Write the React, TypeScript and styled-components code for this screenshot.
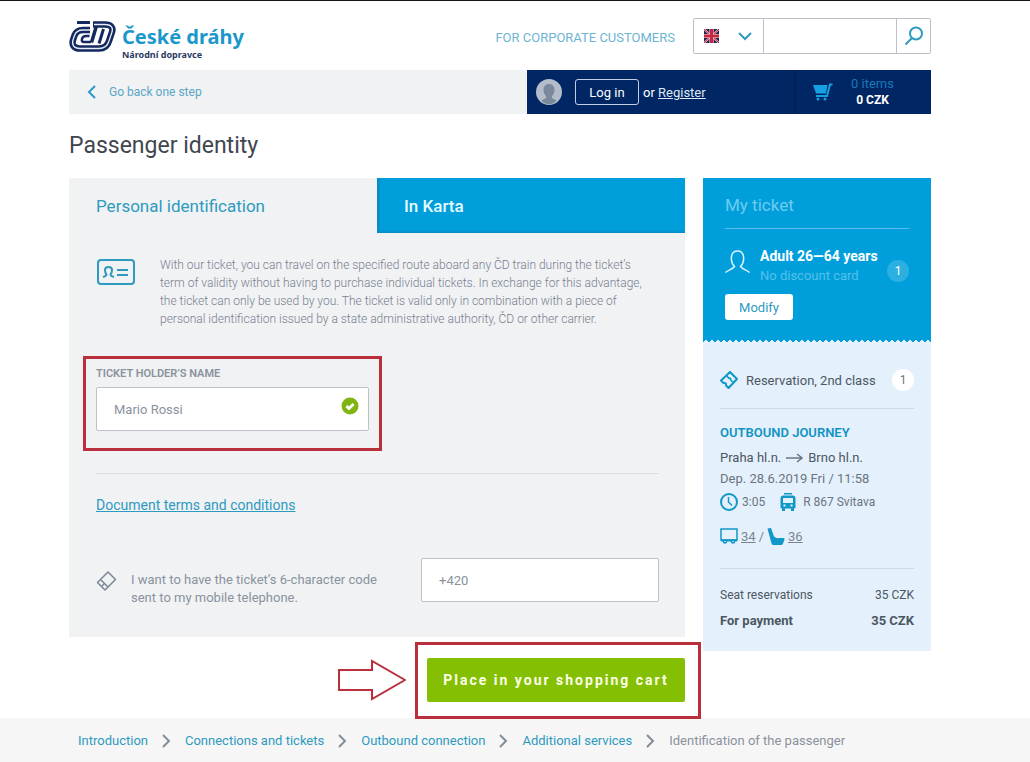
import React from "react";
import styled, { createGlobalStyle } from "styled-components";

const c = {
  blue: "#009fdc",
  link: "#2e9abf",
  icon: "#0f98c8",
  navy: "#002664",
  panel: "#f0f2f4",
  pale: "#e4f0fb",
  text: "#4c5763",
  muted: "#8a929e",
  border: "#bcc1ca",
  line: "#dcdfe3",
  red: "#b9303c",
  green: "#84bf04",
};

const GlobalStyle = createGlobalStyle`
  *, *::before, *::after { box-sizing: border-box; }
  body {
    margin: 0;
    background: #fff;
    color: ${c.text};
    font-family: Roboto, "Liberation Sans", sans-serif;
    font-size: 13px;
  }
  button, input, select { font: inherit; }
  svg { display: block; flex: none; }
`;

const Page = styled.div`
  border-top: 1px solid #17131a;
`;

const Container = styled.div`
  padding: 0 99px 0 69px;
`;

/* ---------- Header ---------- */

const Header = styled.header`
  display: flex;
  align-items: flex-start;
  justify-content: space-between;
  padding-top: 17px;
  min-height: 69px;
`;

const Brand = styled.a`
  display: flex;
  gap: 6px;
  padding-top: 2px;
  text-decoration: none;
`;

const BrandText = styled.span`
  display: flex;
  flex-direction: column;
  padding-top: 1px;
  font-family: "Noto Sans", sans-serif;
  font-weight: 700;
`;

const BrandName = styled.span`
  color: #1a97cb;
  font-size: 20px;
  line-height: 32px;
`;

const BrandSub = styled.span`
  color: #2b3a63;
  font-size: 9px;
  line-height: 8px;
  margin-top: -2px;
`;

const HeaderTools = styled.div`
  display: flex;
  gap: 18px;
`;

const CorporateLink = styled.a`
  color: #6db5d3;
  font-size: 13px;
  line-height: 40px;
  text-decoration: none;
`;

const SearchGroup = styled.form`
  display: flex;
  width: 238px;
  height: 36px;
  border: 1px solid ${c.border};
  border-radius: 2px;
`;

const Language = styled.label`
  position: relative;
  display: flex;
  align-items: center;
  justify-content: space-between;
  width: 70px;
  padding: 0 11px 0 10px;
  border-right: 1px solid ${c.border};
`;

const LanguageSelect = styled.select`
  position: absolute;
  inset: 0;
  width: 100%;
  appearance: none;
  border: 0;
  background: transparent;
`;

const SearchInput = styled.input`
  flex: 1;
  min-width: 0;
  border: 0;
  padding: 0 10px;
  background: transparent;
`;

const SearchButton = styled.button`
  display: grid;
  place-items: center;
  width: 34px;
  padding: 0;
  border: 0;
  border-left: 1px solid ${c.border};
  background: transparent;
`;

/* ---------- User bar ---------- */

const UserBar = styled.div`
  display: flex;
  height: 44px;
`;

const BackArea = styled.nav`
  flex: 1;
  display: flex;
  align-items: center;
  padding-left: 18px;
  background: ${c.panel};
`;

const BackLink = styled.a`
  display: flex;
  align-items: center;
  gap: 13px;
  color: #5ba6c4;
  font-size: 12px;
  text-decoration: none;
`;

const Account = styled.div`
  display: flex;
  align-items: center;
  width: 267px;
  padding-left: 9px;
  background: ${c.navy};
  color: #fff;
`;

const LoginButton = styled.button`
  width: 64px;
  height: 26px;
  margin: 0 4px 0 13px;
  padding: 0;
  border: 1px solid #c3cfe2;
  border-radius: 3px;
  background: transparent;
  color: #fff;
`;

const RegisterLink = styled.a`
  color: #dfe8f5;
`;

const Cart = styled.a`
  display: flex;
  align-items: center;
  gap: 18px;
  width: 137px;
  padding-left: 17px;
  border-left: 2px solid #001f52;
  background: ${c.navy};
  text-decoration: none;
`;

const CartText = styled.span`
  display: flex;
  flex-direction: column;
  align-items: center;
  color: #1879bb;
  font-size: 13px;
  line-height: 17px;

  strong {
    color: #fff;
    font-size: 12px;
  }
`;

/* ---------- Content ---------- */

const Title = styled.h1`
  margin: 0;
  color: #3f4650;
  font-size: 23px;
  font-weight: 400;
  line-height: 64px;
`;

const Columns = styled.div`
  display: grid;
  grid-template-columns: 1fr 228px;
  gap: 18px;
  align-items: start;
`;

const Panel = styled.section`
  background: ${c.panel};
`;

const Tabs = styled.div`
  display: grid;
  grid-template-columns: 1fr 1fr;
  height: 55px;
`;

const Tab = styled.button<{ $active?: boolean }>`
  padding: 0 27px;
  border: 0;
  background: ${(p) => (p.$active ? "transparent" : c.blue)};
  box-shadow: ${(p) => (p.$active ? "none" : "inset 3px -2px 3px -1px #0c86bd")};
  color: ${(p) => (p.$active ? c.link : "#e6fbff")};
  font-size: 17px;
  font-weight: ${(p) => (p.$active ? 400 : 500)};
  text-align: left;
`;

const PanelBody = styled.div`
  padding: 23px 26px 30px 27px;
`;

const Intro = styled.div`
  display: flex;
  align-items: flex-start;
  gap: 25px;

  svg {
    margin-top: 2px;
  }

  p {
    margin: 0;
    color: #78808f;
    font-size: 12px;
    font-weight: 300;
    line-height: 18px;
  }
`;

const Field = styled.div`
  position: relative;
  width: 273px;
  margin-top: 38px;
`;

const FieldLabel = styled.label`
  display: block;
  margin-bottom: 5px;
  color: ${c.muted};
  font-size: 11px;
  font-weight: 600;
  line-height: 16px;
`;

const TextInput = styled.input`
  display: block;
  width: 100%;
  height: 44px;
  padding: 0 17px;
  border: 1px solid ${c.border};
  border-radius: 2px;
  background: #fff;
  color: ${c.muted};
  font-size: 13px;
`;

const ValidMark = styled.span`
  position: absolute;
  right: 10px;
  bottom: 16px;
`;

const FieldHighlight = styled.span`
  position: absolute;
  inset: -10px -13px -20px;
  border: 3px solid ${c.red};
  pointer-events: none;
`;

const Divider = styled.hr<{ $space: string; $color?: string }>`
  height: 1px;
  margin: ${(p) => p.$space};
  border: 0;
  background: ${(p) => p.$color || c.line};
`;

const TermsLink = styled.a`
  display: inline-block;
  color: ${c.link};
  font-size: 14px;
  line-height: 20px;
`;

const SmsRow = styled.div`
  display: flex;
  align-items: flex-start;
  justify-content: space-between;
  margin-top: 43px;
`;

const SmsLabel = styled.label`
  display: flex;
  gap: 14px;
  width: 300px;
  padding-top: 13px;
  color: ${c.muted};
  line-height: 18px;
`;

const PhoneBox = styled.div`
  width: 238px;
`;

const Actions = styled.div`
  display: flex;
  align-items: center;
  justify-content: flex-end;
  gap: 21px;
  padding: 21px 0 16px;
`;

const SubmitWrap = styled.div`
  position: relative;
`;

const SubmitHighlight = styled.span`
  position: absolute;
  inset: -16px -16px -17px -12px;
  border: 3px solid ${c.red};
  pointer-events: none;
`;

const SubmitButton = styled.button`
  display: block;
  width: 258px;
  height: 44px;
  padding: 0;
  border: 0;
  border-radius: 2px;
  background: ${c.green};
  color: #fbffe6;
  font-size: 14px;
  font-weight: 700;
  letter-spacing: 2px;
`;

/* ---------- Ticket ---------- */

const Ticket = styled.aside`
  background: ${c.pale};
`;

const TicketTop = styled.div`
  height: 161px;
  padding: 13px 22px 0;
  background: ${c.blue};
`;

const TicketEdge = styled.div`
  height: 3px;
  background-image:
    linear-gradient(45deg, transparent 75%, ${c.blue} 75%),
    linear-gradient(-45deg, transparent 75%, ${c.blue} 75%);
  background-size: 6px 6px;
`;

const TicketTitle = styled.h2`
  margin: 0;
  color: #6fcbef;
  font-size: 17px;
  font-weight: 400;
  line-height: 28px;
`;

const Passenger = styled.div`
  display: flex;
  align-items: flex-start;
  gap: 10px;

  svg {
    margin-top: 4px;
  }
`;

const PassengerText = styled.div`
  flex: 1;
  color: #55c0ea;
  font-size: 13px;
  line-height: 20px;
  white-space: nowrap;

  strong {
    display: block;
    color: #fff;
    font-size: 14px;
  }
`;

const Badge = styled.span<{ $pale?: boolean }>`
  width: 22px;
  height: 22px;
  border-radius: 50%;
  background: ${(p) => (p.$pale ? "#fff" : "#2cb0e2")};
  color: ${(p) => (p.$pale ? "#6c7480" : "#fff")};
  font-size: 12px;
  line-height: 22px;
  text-align: center;
`;

const PassengerBadge = styled(Badge)`
  align-self: flex-end;
  margin: 0 0 4px -10px;
`;

const ModifyButton = styled.button`
  width: 68px;
  height: 26px;
  margin-top: 8px;
  padding: 0;
  border: 0;
  border-radius: 3px;
  background: #fff;
  color: ${c.link};
`;

const TicketBody = styled.div`
  padding: 25px 17px 18px;
`;

const Line = styled.div<{ $size?: number; $color?: string; $height: number; $gap?: number }>`
  display: flex;
  align-items: center;
  gap: ${(p) => p.$gap || 0}px;
  height: ${(p) => p.$height}px;
  color: ${(p) => p.$color || c.text};
  font-size: ${(p) => p.$size || 13}px;
  white-space: nowrap;
`;

const LineEnd = styled.span`
  margin-left: auto;
`;

const JourneyTitle = styled.h3`
  margin: 0;
  color: #1393c4;
  font-size: 13px;
  font-weight: 600;
  line-height: 24px;
`;

const TrainGroup = styled.span`
  display: flex;
  align-items: center;
  gap: 7px;
  margin-left: 11px;
`;

const PlaceLink = styled.a`
  color: #7b8592;
`;

const Total = styled(Line)`
  font-weight: 700;
`;

/* ---------- Breadcrumb ---------- */

const Breadcrumb = styled.nav`
  display: flex;
  align-items: center;
  gap: 14px;
  min-height: 44px;
  padding: 1px 78px 0;
  background: #f6f6f6;
  color: ${c.muted};
  white-space: nowrap;

  a {
    color: ${c.link};
    text-decoration: none;
  }
`;

/* ---------- Drawings ---------- */

const Logo = () => (
  <svg width="47" height="33" viewBox="0 0 47 33" fill="none" strokeLinejoin="round">
    <g stroke="#14295f">
      <path
        d="M24 4.500H36C42 4.500 44.500 7.500 43 12L40 21C38.500 26 35 28.500 30 28.500H11C5 28.500 2.500 25 4 20L5.500 15.500C7 11.500 9.500 10 14 10H21"
        strokeWidth="6.500"
      />
      <path d="M20.500 16H17C14.500 16 13.500 17 13 19C12.500 21 13 22 15 22H22" strokeWidth="2.500" />
      <path d="M28 4L22.500 22.500" strokeWidth="3.500" />
      <path d="M34.500 9L30 23.500" strokeWidth="3" />
      <path d="M8 2.500H21" strokeWidth="3" />
    </g>
    <path
      d="M25 4.500H36C42 4.500 44.500 7.500 43 12L40 21C38.500 26 35 28.500 30 28.500H11C5 28.500 2.500 25 4 20L5.500 15.500C7 11.500 9.500 10 14 10H21"
      stroke="#e6edf6"
      strokeWidth="1.300"
    />
  </svg>
);

const Flag = () => (
  <svg width="15" height="14" viewBox="0 0 15 14">
    <rect width="15" height="14" fill="#2a2148" />
    <path d="M0 0L15 14M15 0L0 14" stroke="#e3c9d2" strokeWidth="2" />
    <path d="M0 0L15 14M15 0L0 14" stroke="#c8283f" strokeWidth="1" />
    <path d="M7.500 0V14M0 7H15" stroke="#f3e0e6" strokeWidth="4" />
    <path d="M7.500 0V14M0 7H15" stroke="#c8283f" strokeWidth="3" />
  </svg>
);

const Chevron = ({ d, w, h, color }: { d: string; w: number; h: number; color: string }) => (
  <svg width={w} height={h} viewBox={`0 0 ${w} ${h}`} fill="none" stroke={color} strokeWidth="2">
    <path d={d} />
  </svg>
);

const SearchIcon = () => (
  <svg width="20" height="20" viewBox="0 0 20 20" fill="none" stroke={c.link} strokeWidth="2">
    <circle cx="12" cy="7.500" r="6" />
    <path d="M8 12L1.500 18.500" />
  </svg>
);

const Avatar = () => (
  <svg width="26" height="26" viewBox="0 0 26 26">
    <circle cx="13" cy="13" r="13" fill="#b3bcc8" />
    <path
      d="M13 5C9.500 5 7.500 7.500 7.500 11C7.500 14 9 16 10 17V19L5.500 21.500C9 26.500 17 26.500 20.500 21.500L16 19V17C17 16 18.500 14 18.500 11C18.500 7.500 16.500 5 13 5Z"
      fill="#7a899b"
    />
  </svg>
);

const CartIcon = () => (
  <svg width="20" height="18" viewBox="0 0 20 18" fill="#14a0e2">
    <path d="M0 2H14.500L13 10.500H3Z" />
    <path d="M19.500 1.500H17L14 13H3" fill="none" stroke="#14a0e2" strokeWidth="2" />
    <circle cx="5" cy="16" r="1.500" />
    <circle cx="12" cy="16" r="1.500" />
  </svg>
);

const IdCardIcon = () => (
  <svg width="39" height="28" viewBox="0 0 39 28" fill="none" stroke={c.link} strokeWidth="2">
    <rect x="2" y="2" width="36" height="24" rx="3" />
    <path d="M7 19C9 18.500 10.500 18 10.500 16.500C9 15 9 13 9 12C9 10 10.500 9 12.500 9C14.500 9 16 10 16 12C16 13 16 15 14.500 16.500C14.500 18 16 18.500 18 19" />
    <path d="M21 12H32M21 17H32" />
  </svg>
);

const CheckIcon = () => (
  <svg width="18" height="18" viewBox="0 0 18 18">
    <circle cx="9" cy="9" r="8.500" fill="#7fb413" />
    <path d="M5.500 9L8 11.500L12.500 7" fill="none" stroke="#fff" strokeWidth="3" />
  </svg>
);

const CodeIcon = () => (
  <svg width="21" height="20" viewBox="0 0 21 20" fill="none" stroke="#7d8794" strokeWidth="1.500" strokeLinejoin="round">
    <path d="M12 1L19.500 8.500L9 19L1.500 11.500ZM4.500 8.500L12 16" />
    <path d="M5.500 15.500L8.500 12.500" />
  </svg>
);

const PersonIcon = () => (
  <svg width="25" height="24" viewBox="0 0 25 24" fill="none" stroke="#d8f4ff" strokeWidth="1.500">
    <path d="M0.500 22.500C2 20.500 7 20 9.500 16.500C6.500 13.500 6 10 6.500 6.500C7 3 9 1 12.500 1C16 1 18 3 18.500 6.500C19 10 18.500 13.500 15.500 16.500C18 20 23 20.500 24.500 22.500" />
  </svg>
);

const TicketIcon = () => (
  <svg width="18" height="18" viewBox="0 0 18 18" fill="none" stroke={c.icon} strokeWidth="2" strokeLinejoin="round">
    <path d="M10 1L17 8L8.500 17L6 14.500C6.500 13 5.500 11.500 3.500 12L1 9.500Z" />
    <path d="M6.500 4.500L9 7.500C10 6.500 11.500 8 10.500 9L13.500 11.500" strokeWidth="1.500" />
  </svg>
);

const ArrowIcon = () => (
  <svg width="17" height="10" viewBox="0 0 17 10" fill="none" stroke="#6d7783" strokeWidth="1.500">
    <path d="M0 5H16M11 1L16 5L11 9" />
  </svg>
);

const ClockIcon = () => (
  <svg width="18" height="18" viewBox="0 0 18 18" fill="none" stroke={c.icon} strokeWidth="2">
    <circle cx="9" cy="9" r="8" />
    <path d="M8.500 4V9L12 12.500" strokeWidth="1.500" />
  </svg>
);

const TrainIcon = () => (
  <svg width="16" height="18" viewBox="0 0 16 18" fill={c.icon}>
    <path d="M4 0H12V1.500H4Z" />
    <path
      fillRule="evenodd"
      d="M3.500 2.500H12.500Q15.500 2.500 15.500 5.500V14Q15.500 15.500 14 15.500H2Q0.500 15.500 0.500 14V5.500Q0.500 2.500 3.500 2.500ZM3 5V10H13V5ZM3.500 11.500V13.500H5.500V11.500ZM10.500 11.500V13.500H12.500V11.500Z"
    />
    <path d="M2 15H5V18H2ZM11 15H14V18H11Z" />
  </svg>
);

const CarriageIcon = () => (
  <svg width="18" height="16" viewBox="0 0 18 16" fill="none" stroke={c.icon}>
    <path d="M1 1H17V12H1Z" strokeWidth="1.500" />
    <path d="M1 12.500H17" strokeWidth="2" />
    <circle cx="5" cy="13.500" r="1.500" fill={c.pale} strokeWidth="1.500" />
    <circle cx="13" cy="13.500" r="1.500" fill={c.pale} strokeWidth="1.500" />
  </svg>
);

const SeatIcon = () => (
  <svg width="18" height="17" viewBox="0 0 18 17" fill={c.icon}>
    <path d="M0.500 0.500L4 0L7 8.500Q10 11 12 10H16.500Q18 10 17.500 11.500L16 15.500Q15.500 17 14 17H6.500Q5 17 4.500 15.500Z" />
  </svg>
);

const PointerArrow = () => (
  <svg width="68" height="42" viewBox="0 0 68 42" fill="none" stroke={c.red} strokeWidth="2">
    <path d="M1 11H34V2L67 21L34 40V31H1Z" />
  </svg>
);

const crumbs = ["Introduction", "Connections and tickets", "Outbound connection", "Additional services"];

export default function App() {
  return (
    <Page>
      <GlobalStyle />
      <Container>
        <Header>
          <Brand href="#">
            <Logo />
            <BrandText>
              <BrandName>České dráhy</BrandName>
              <BrandSub>Národní dopravce</BrandSub>
            </BrandText>
          </Brand>
          <HeaderTools>
            <CorporateLink href="#">FOR CORPORATE CUSTOMERS</CorporateLink>
            <SearchGroup role="search">
              <Language>
                <Flag />
                <Chevron d="M1 1L7 7L13 1" w={14} h={9} color={c.link} />
                <LanguageSelect aria-label="Language">
                  <option value="en" aria-label="English" />
                </LanguageSelect>
              </Language>
              <SearchInput type="search" aria-label="Search" />
              <SearchButton type="submit" aria-label="Search">
                <SearchIcon />
              </SearchButton>
            </SearchGroup>
          </HeaderTools>
        </Header>

        <UserBar>
          <BackArea>
            <BackLink href="#">
              <Chevron d="M8 1L2 7L8 13" w={9} h={14} color={c.link} />
              Go back one step
            </BackLink>
          </BackArea>
          <Account>
            <Avatar />
            <LoginButton type="button">Log in</LoginButton>
            <span>
              or <RegisterLink href="#">Register</RegisterLink>
            </span>
          </Account>
          <Cart href="#">
            <CartIcon />
            <CartText>
              0 items
              <strong>0 CZK</strong>
            </CartText>
          </Cart>
        </UserBar>

        <Title>Passenger identity</Title>

        <Columns>
          <main>
            <Panel>
              <Tabs role="tablist">
                <Tab type="button" role="tab" aria-selected $active>
                  Personal identification
                </Tab>
                <Tab type="button" role="tab" aria-selected={false}>
                  In Karta
                </Tab>
              </Tabs>
              <PanelBody>
                <Intro>
                  <IdCardIcon />
                  <p>
                    With our ticket, you can travel on the specified route aboard any ČD train during the ticket’s
                    <br />
                    term of validity without having to purchase individual tickets. In exchange for this advantage,
                    <br />
                    the ticket can only be used by you. The ticket is valid only in combination with a piece of
                    <br />
                    personal identification issued by a state administrative authority, ČD or other carrier.
                  </p>
                </Intro>
                <Field>
                  <FieldLabel htmlFor="holder">TICKET HOLDER’S NAME</FieldLabel>
                  <TextInput id="holder" type="text" defaultValue="Mario Rossi" />
                  <ValidMark>
                    <CheckIcon />
                  </ValidMark>
                  <FieldHighlight />
                </Field>
                <Divider $space="42px 0 21px" />
                <TermsLink href="#">Document terms and conditions</TermsLink>
                <SmsRow>
                  <SmsLabel htmlFor="phone">
                    <CodeIcon />
                    <span>
                      I want to have the ticket’s 6-character code
                      <br />
                      sent to my mobile telephone.
                    </span>
                  </SmsLabel>
                  <PhoneBox>
                    <TextInput id="phone" type="tel" defaultValue="+420" />
                  </PhoneBox>
                </SmsRow>
              </PanelBody>
            </Panel>
            <Actions>
              <PointerArrow />
              <SubmitWrap>
                <SubmitButton type="button">Place in your shopping cart</SubmitButton>
                <SubmitHighlight />
              </SubmitWrap>
            </Actions>
          </main>

          <Ticket>
            <TicketTop>
              <TicketTitle>My ticket</TicketTitle>
              <Divider $space="9px 0 17px" $color="#58c0ea" />
              <Passenger>
                <PersonIcon />
                <PassengerText>
                  <strong>Adult 26—64 years</strong>
                  No discount card
                </PassengerText>
                <PassengerBadge>1</PassengerBadge>
              </Passenger>
              <ModifyButton type="button">Modify</ModifyButton>
            </TicketTop>
            <TicketEdge />
            <TicketBody>
              <Line $height={26} $gap={8}>
                <TicketIcon />
                Reservation, 2nd class
                <LineEnd>
                  <Badge as="div" $pale>
                    1
                  </Badge>
                </LineEnd>
              </Line>
              <Divider $space="15px 0 12px" $color="#cfd9e4" />
              <JourneyTitle>OUTBOUND JOURNEY</JourneyTitle>
              <Line $height={25} $gap={5}>
                Praha hl.n. <ArrowIcon /> Brno hl.n.
              </Line>
              <Line $height={16} $color="#6b7480">
                Dep. 28.6.2019 Fri / 11:58
              </Line>
              <Line $height={32} $gap={4} $size={12} $color="#6b7480">
                <ClockIcon />
                3:05
                <TrainGroup>
                  <TrainIcon />R 867 Svitava
                </TrainGroup>
              </Line>
              <Line $height={36} $gap={3} $color="#7b8592">
                <CarriageIcon />
                <PlaceLink href="#">34</PlaceLink>/
                <SeatIcon />
                <PlaceLink href="#">36</PlaceLink>
              </Line>
              <Divider $space="14px 0 13px" $color="#cfd9e4" />
              <Line $height={26} $size={12}>
                Seat reservations
                <LineEnd>35 CZK</LineEnd>
              </Line>
              <Total $height={25}>
                For payment
                <LineEnd>35 CZK</LineEnd>
              </Total>
            </TicketBody>
          </Ticket>
        </Columns>
      </Container>

      <Breadcrumb aria-label="Breadcrumb">
        {crumbs.map((label) => (
          <React.Fragment key={label}>
            <a href="#">{label}</a>
            <Chevron d="M1 1L7 7L1 13" w={9} h={14} color="#858d97" />
          </React.Fragment>
        ))}
        <span>Identification of the passenger</span>
      </Breadcrumb>
    </Page>
  );
}
